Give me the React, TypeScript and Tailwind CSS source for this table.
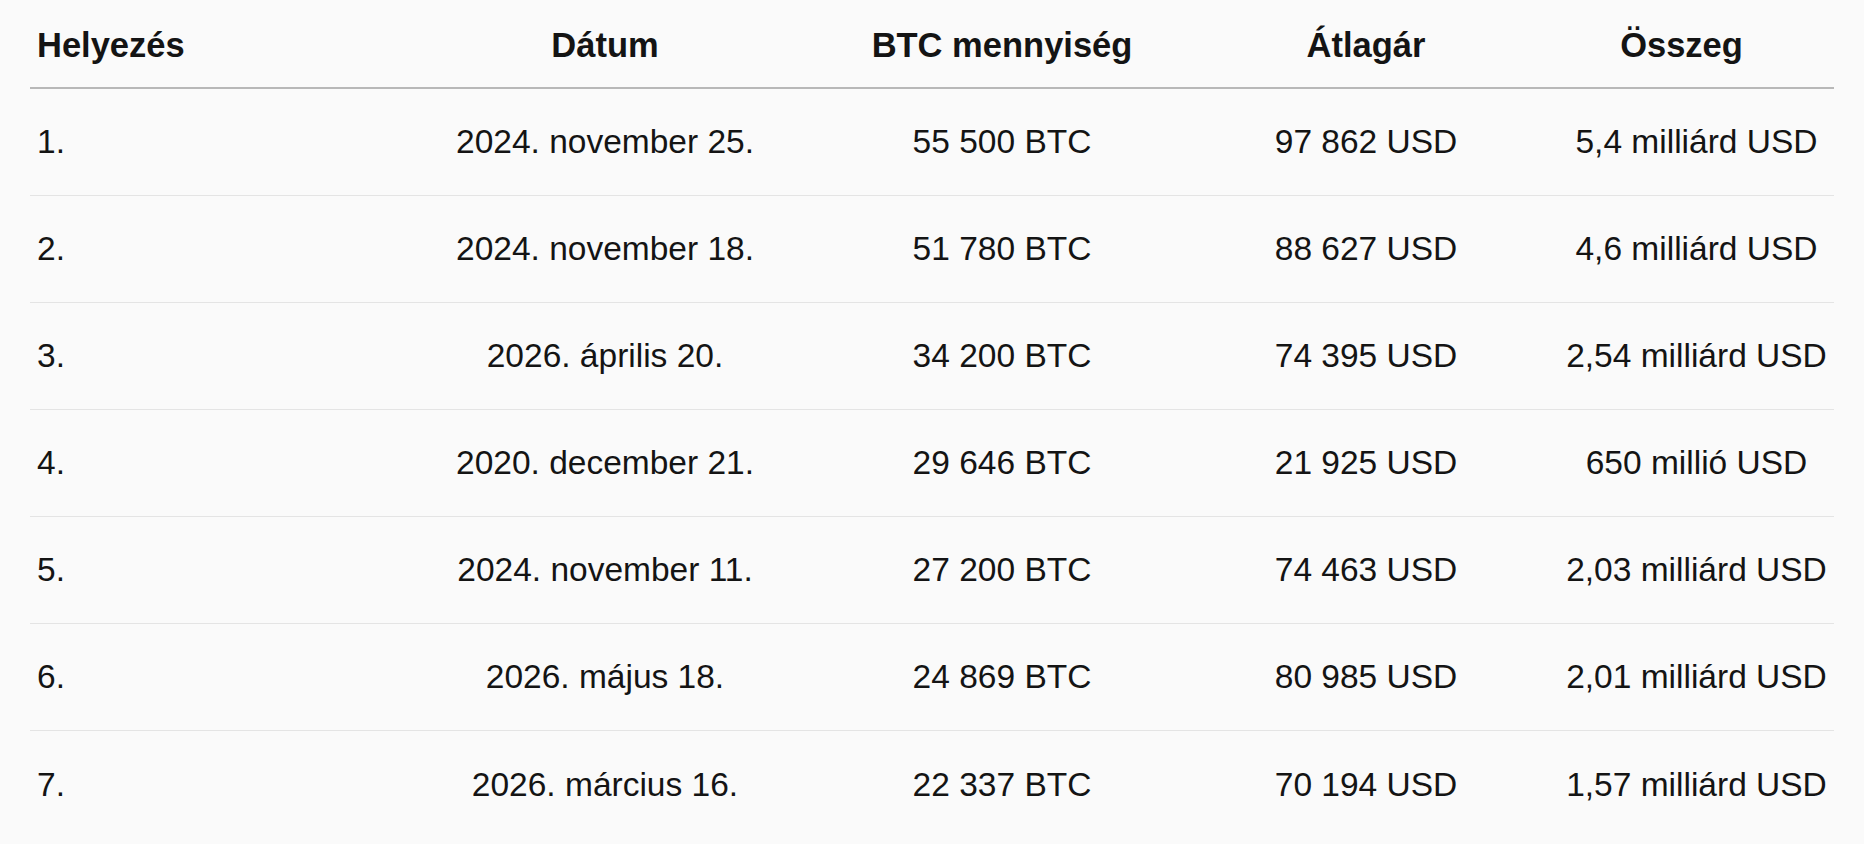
import React from "react";

const rows = [
  ["1.", "2024. november 25.", "55 500 BTC", "97 862 USD", "5,4 milliárd USD"],
  ["2.", "2024. november 18.", "51 780 BTC", "88 627 USD", "4,6 milliárd USD"],
  ["3.", "2026. április 20.", "34 200 BTC", "74 395 USD", "2,54 milliárd USD"],
  ["4.", "2020. december 21.", "29 646 BTC", "21 925 USD", "650 millió USD"],
  ["5.", "2024. november 11.", "27 200 BTC", "74 463 USD", "2,03 milliárd USD"],
  ["6.", "2026. május 18.", "24 869 BTC", "80 985 USD", "2,01 milliárd USD"],
  ["7.", "2026. március 16.", "22 337 BTC", "70 194 USD", "1,57 milliárd USD"],
];

export default function App() {
  return (
    <div
      className="w-[1864px] h-[844px] overflow-hidden bg-[#fafafa] px-[30px] text-[#141414]"
      style={{ fontFamily: '"Liberation Sans", Arial, sans-serif' }}
    >
      <div className="grid grid-cols-[380px_390px_404px_324px_307px] h-[89px] pt-[4px] items-center border-b-2 border-[#b8b8b8] text-[34.5px] font-bold leading-none">
        <div className="pl-[7px]">Helyezés</div>
        <div className="text-center">Dátum</div>
        <div className="text-center">BTC mennyiség</div>
        <div className="text-center">Átlagár</div>
        <div className="text-center">Összeg</div>
      </div>
      {rows.map((r, i) => (
        <div
          key={i}
          className={
            i < rows.length - 1
              ? "grid grid-cols-[380px_390px_404px_324px_307px] h-[107px] items-center border-b border-[#e4e4e4] text-[33.5px] leading-none"
              : "grid grid-cols-[380px_390px_404px_324px_307px] h-[107px] items-center text-[33.5px] leading-none"
          }
        >
          <div className="pl-[7px]">{r[0]}</div>
          <div className="text-center">{r[1]}</div>
          <div className="text-center">{r[2]}</div>
          <div className="text-center">{r[3]}</div>
          <div className="text-center pl-[30px] whitespace-nowrap">{r[4]}</div>
        </div>
      ))}
    </div>
  );
}
